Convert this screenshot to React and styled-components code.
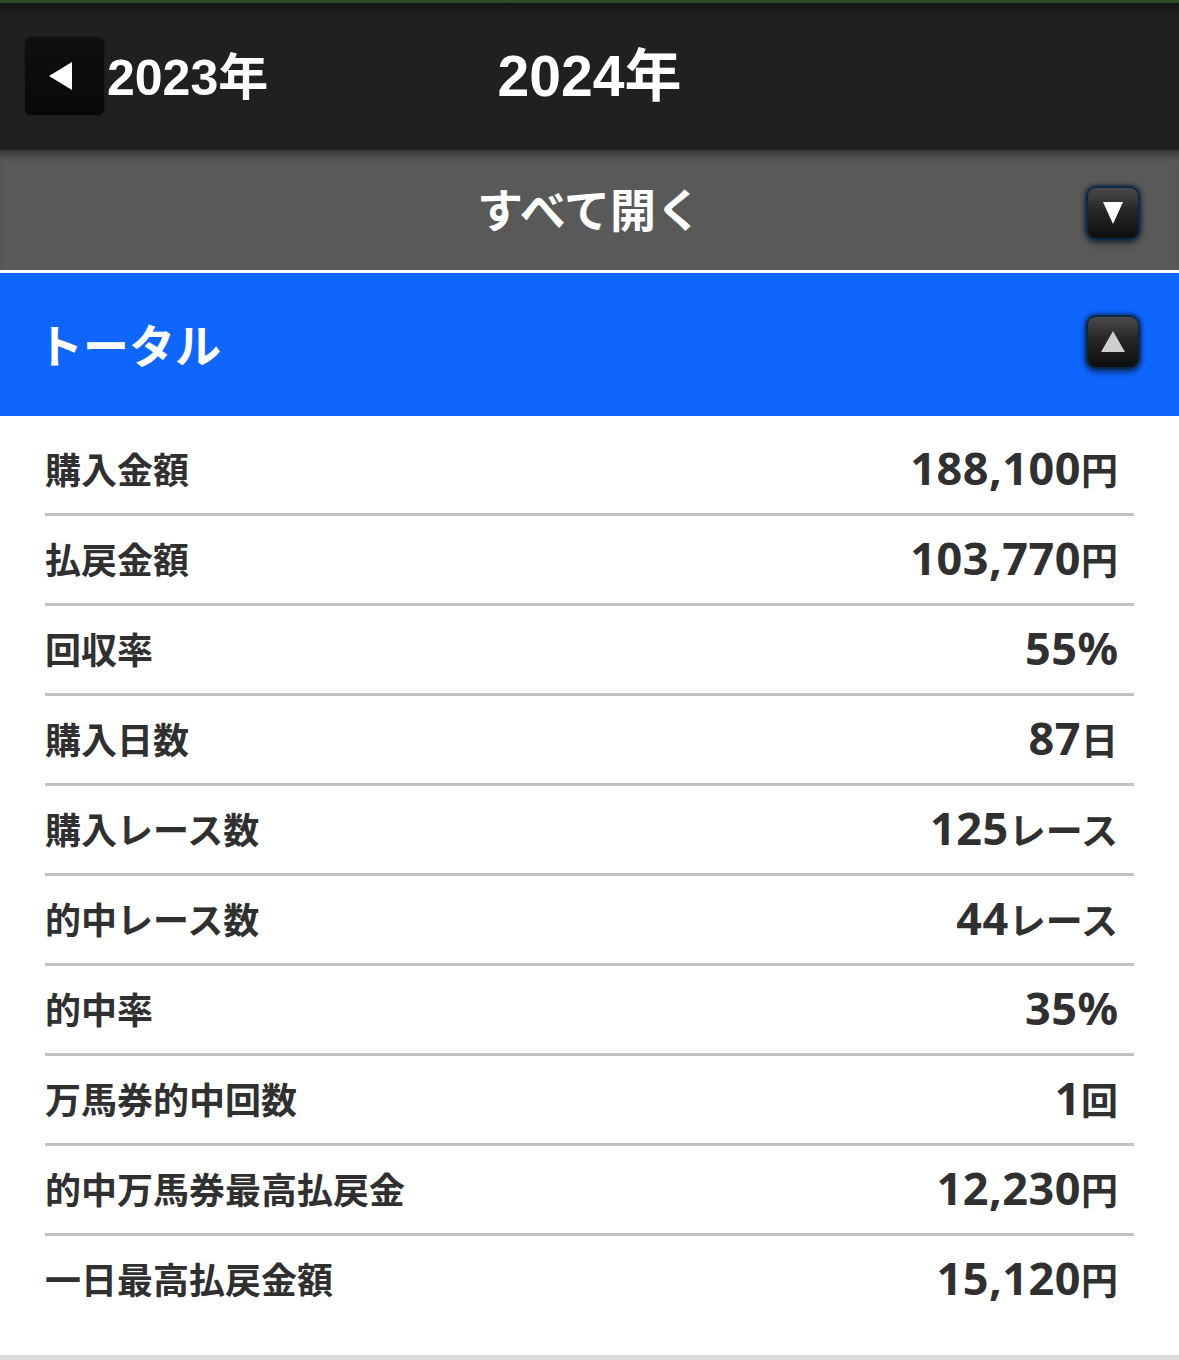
import React from 'react';
import styled, { createGlobalStyle } from 'styled-components';

const GlobalStyle = createGlobalStyle`
  body {
    margin: 0;
    background: #ffffff;
    font-family: "Noto Sans CJK JP", "Noto Sans", sans-serif;
  }
`

const rows = [
  { label: '購入金額', num: '188,100', unit: '円' },
  { label: '払戻金額', num: '103,770', unit: '円' },
  { label: '回収率', num: '55', unit: '%', latin: true },
  { label: '購入日数', num: '87', unit: '日' },
  { label: '購入レース数', num: '125', unit: 'レース' },
  { label: '的中レース数', num: '44', unit: 'レース' },
  { label: '的中率', num: '35', unit: '%', latin: true },
  { label: '万馬券的中回数', num: '1', unit: '回' },
  { label: '的中万馬券最高払戻金', num: '12,230', unit: '円' },
  { label: '一日最高払戻金額', num: '15,120', unit: '円' },
]

const Page = styled.div`
  width: 1179px;
  min-height: 1360px;
  display: flex;
  flex-direction: column;
  background: #ffffff;
`

const YearBar = styled.header`
  height: 147px;
  border-top: 3px solid #2e4a23;
  background: linear-gradient(#141414 0px, #202020 14px, #202020 100%);
  display: grid;
  grid-template-columns: 1fr auto 1fr;
  align-items: center;
  padding: 0 25px;
`

const PrevYear = styled.div`
  display: flex;
  align-items: center;
  gap: 3px;
  margin-top: -2px;
`

const BackButton = styled.div`
  width: 79px;
  height: 78px;
  border-radius: 6px;
  background: linear-gradient(#101010, #080808);
  box-shadow: 0 0 2px rgba(0, 0, 0, 0.6);
  display: flex;
  align-items: center;
  justify-content: center;
  padding-right: 8px;
  box-sizing: border-box;
`

const YearText = styled.span`
  color: #ffffff;
  font-family: "Liberation Sans", "Noto Sans CJK JP", sans-serif;
  font-weight: 700;
  font-size: ${(p) => p.$size}px;
  line-height: 1;
  margin-top: ${(p) => p.$offset || 0}px;
`

const OpenAllBar = styled.div`
  height: 120px;
  background: #595959;
  box-shadow: inset 0 9px 8px -5px rgba(0, 0, 0, 0.45);
  display: grid;
  grid-template-columns: 1fr auto 1fr;
  align-items: center;
  padding: 0 39px;
  border-bottom: 3px solid #ffffff;
`

const BarTitle = styled.span`
  color: #ffffff;
  font-weight: 700;
  font-size: 46px;
  line-height: 1;
  margin-top: ${(p) => p.$offset || 0}px;
`

const ToggleButton = styled.div`
  justify-self: end;
  width: 50px;
  height: 50px;
  border-radius: 10px;
  border: 2px solid #0a2a48;
  background: linear-gradient(#4a4a4a 0%, #262626 45%, #0e0e0e 100%);
  box-shadow: 0 0 4px 1px rgba(8, 30, 60, 0.8), 0 4px 6px rgba(0, 0, 0, 0.35);
  display: flex;
  align-items: center;
  justify-content: center;
  margin-top: ${(p) => p.$offset || 0}px;
`

const TotalBar = styled.div`
  height: 143px;
  background: #0f66ff;
  display: flex;
  align-items: center;
  justify-content: space-between;
  padding: 0 39px 0 37px;
`

const StatList = styled.div`
  padding: 10px 45px 32px 45px;
  flex: 1;
`

const StatRow = styled.div`
  height: 87px;
  display: flex;
  align-items: center;
  justify-content: space-between;
  padding: 0 16px 0 0;
  border-bottom: 3px solid #c2c2c2;
  color: #303030;

  &:last-child {
    border-bottom: none;
  }
`

const Label = styled.span`
  font-weight: 700;
  font-size: 36px;
  line-height: 1;
  margin-top: -4px;
`

const Value = styled.span`
  display: flex;
  align-items: baseline;
  line-height: 1;
  margin-top: -4px;
`

const Num = styled.span`
  font-family: "Noto Sans", sans-serif;
  font-weight: 700;
  font-size: 45px;
  letter-spacing: 0.5px;
`

const Unit = styled.span`
  font-family: ${(p) => (p.$latin ? '"Noto Sans", sans-serif' : '"Noto Sans CJK JP", sans-serif')};
  font-weight: 700;
  font-size: ${(p) => (p.$latin ? 45 : 37)}px;
`

const BottomEdge = styled.div`
  height: 5px;
  background: #dcdcdc;
`

const Triangle = ({ dir, color = '#ffffff', w = 22, h = 22 }) => {
  const pts = {
    left: `${w},0 ${w},${h} 0,${h / 2}`,
    down: `0,0 ${w},0 ${w / 2},${h}`,
    up: `${w / 2},0 ${w},${h} 0,${h}`,
  }[dir]
  return (
    <svg width={w} height={h} viewBox={`0 0 ${w} ${h}`}>
      <polygon points={pts} fill={color} />
    </svg>
  )
}

const App = () => {
  return (
    <Page>
      <GlobalStyle />
      <YearBar>
        <PrevYear>
          <BackButton>
            <Triangle dir="left" w={23} h={28} />
          </BackButton>
          <YearText $size={50} $offset={4}>2023年</YearText>
        </PrevYear>
        <YearText $size={57}>2024年</YearText>
        <div />
      </YearBar>

      <OpenAllBar>
        <div />
        <BarTitle $offset={-6}>すべて開く</BarTitle>
        <ToggleButton $offset={6}>
          <Triangle dir="down" w={20} h={22} />
        </ToggleButton>
      </OpenAllBar>

      <TotalBar>
        <BarTitle $offset={-4}>トータル</BarTitle>
        <ToggleButton $offset={-6}>
          <Triangle dir="up" color="#cfcfcf" w={24} h={21} />
        </ToggleButton>
      </TotalBar>

      <StatList>
        {rows.map((r) => (
          <StatRow key={r.label}>
            <Label>{r.label}</Label>
            <Value>
              <Num>{r.num}</Num>
              <Unit $latin={r.latin}>{r.unit}</Unit>
            </Value>
          </StatRow>
        ))}
      </StatList>
      <BottomEdge />
    </Page>
  );
}

export default App;
